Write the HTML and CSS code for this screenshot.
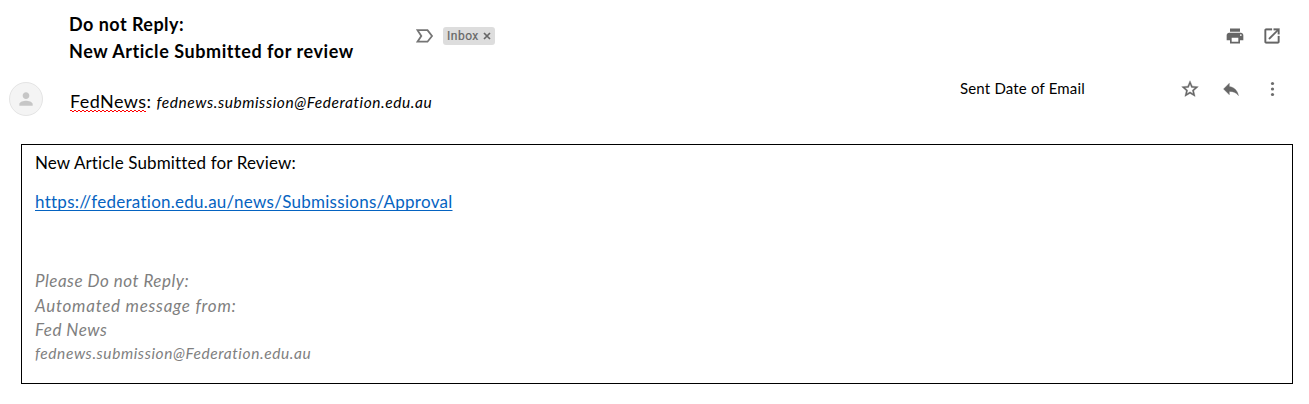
FILE: index.html
```html
<!DOCTYPE html>
<html lang="en">
<head>
<meta charset="utf-8">
<title>New Article Submitted for review</title>
<link rel="stylesheet" href="styles.css">
</head>
<body>
<header class="subject-row">
  <h1 class="subject"><span class="s1">Do not Reply:</span><br><span class="s2">New Article Submitted for review</span></h1>
  <svg class="marker" width="18" height="14" viewBox="0 0 18 14"><path d="M1.500 1.200H11.500L16 7L11.500 12.700H1.500L5.300 7Z" fill="none" stroke="#757575" stroke-width="1.800"/></svg>
  <span class="label"><span class="label-name">Inbox</span><svg width="8" height="8" viewBox="0 0 8 8"><path d="M1 1L7 7M7 1L1 7" stroke="#666" stroke-width="1.700"/></svg></span>
  <div class="tools">
    <svg width="20" height="20" viewBox="0 0 24 24"><path fill="#666" d="M19 8H5c-1.660 0-3 1.340-3 3v6h4v4h12v-4h4v-6c0-1.660-1.340-3-3-3zm-3 11H8v-5h8v5zm3-7c-.55 0-1-.45-1-1s.45-1 1-1 1 .45 1 1-.45 1-1 1zm-1-9H6v4h12V3z"/></svg>
    <svg width="20" height="20" viewBox="0 0 24 24"><path fill="#666" stroke="#666" stroke-width=".3" d="M19 19H5V5h7V3H5c-1.110 0-2 .9-2 2v14c0 1.100.89 2 2 2h14c1.100 0 2-.9 2-2v-7h-2v7zM14 3v2h3.590l-9.830 9.830 1.410 1.410L19 6.410V10h2V3h-7z"/></svg>
  </div>
</header>
<section class="sender-row">
  <div class="avatar"><svg width="20" height="20" viewBox="0 0 24 24"><path fill="#c6c6c6" d="M12 12c2.210 0 4-1.790 4-4s-1.790-4-4-4-4 1.790-4 4 1.790 4 4 4zm0 2c-2.670 0-8 1.340-8 4v2h16v-2c0-2.660-5.330-4-8-4z"/></svg></div>
  <p class="sender"><span class="name">FedNews</span><span class="colon">:</span><em class="address">fednews.submission@Federation.edu.au</em></p>
  <span class="date">Sent Date of Email</span>
  <div class="actions">
    <svg width="20" height="20" viewBox="0 0 24 24"><path fill="#666" stroke="#666" stroke-width=".4" d="M22 9.240l-7.190-.62L12 2 9.190 8.630 2 9.240l5.460 4.730L5.820 21 12 17.270 18.180 21l-1.630-7.030L22 9.240zM12 15.400l-3.760 2.270 1-4.280-3.320-2.880 4.380-.38L12 6.100l1.710 4.040 4.380.38-3.320 2.880 1 4.280L12 15.400z"/></svg>
    <svg width="20" height="20" viewBox="0 0 24 24"><path fill="#666" stroke="#666" stroke-width=".4" d="M10 9V5l-7 7 7 7v-4.100c5 0 8.500 1.600 11 5.100-1-5-4-10-11-11z"/></svg>
    <svg width="20" height="20" viewBox="0 0 20 20"><g fill="#6c6c6c"><circle cx="10.500" cy="4.500" r="1.600"/><circle cx="10.500" cy="10" r="1.600"/><circle cx="10.500" cy="15.500" r="1.600"/></g></svg>
  </div>
</section>
<main class="message">
  <p class="intro"><span>New Article Submitted for Review:</span></p>
  <p class="link-line"><a class="link" href="#">https://federation.edu.au/news/Submissions/Approval</a></p>
  <footer class="signature">
    <p><span class="g1">Please Do not Reply:</span></p>
    <p><span class="g2">Automated message from:</span></p>
    <p><span class="g3">Fed News</span></p>
    <p class="small"><span class="g4">fednews.submission@Federation.edu.au</span></p>
  </footer>
</main>
</body>
</html>
```
FILE: styles.css
```css
* { box-sizing: border-box; }
body { margin: 0; background: #fff; color: #000; font-family: Lato, "Liberation Sans", sans-serif; }
p, h1 { margin: 0; }
svg { display: block; flex: none; }
.subject-row { display: flex; height: 72px; padding: 11px 27px 0 69px; }
.subject { width: 347px; font-size: 18px; line-height: 27px; font-weight: 700; white-space: nowrap; }
.s1 { letter-spacing: .46px; }
.s2 { letter-spacing: .56px; }
.marker { margin-top: 18px; }
.label { display: flex; align-items: center; gap: 4px; width: 52px; height: 18px; margin: 16px 0 0 9px; padding-left: 4px; border-radius: 3px; background: #ddd; color: #666; font: 400 12px/18px Roboto, sans-serif; letter-spacing: .5px; -webkit-text-stroke: .2px #666; }
.tools { display: flex; gap: 17px; margin: 15px 0 0 auto; }
.sender-row { display: flex; height: 72px; padding: 0 27px 0 9px; }
.avatar { display: flex; align-items: center; justify-content: center; width: 34px; height: 34px; margin-top: 10px; border: 1px solid #e4e4e4; border-radius: 50%; background: #f4f4f4; }
.sender { display: flex; align-items: baseline; width: 890px; margin: 16px 0 0 27px; line-height: 27px; white-space: nowrap; }
/* Spelling squiggle: two one-pixel rows of dashes, half a period apart */
.name {
  font-size: 18px; line-height: 20px; letter-spacing: .4px; padding-bottom: 1px;
  background:
    linear-gradient(90deg, #f00 2px, transparent 2px) 0 calc(100% - 1px) / 4px 1px repeat-x,
    linear-gradient(90deg, transparent 2px, #f00 2px) 0 100% / 4px 1px repeat-x;
}
.colon { width: 10px; font-size: 18px; }
.address { font-size: 15.5px; letter-spacing: .57px; }
.date { font-size: 15px; line-height: 20px; margin-top: 6px; letter-spacing: .18px; white-space: nowrap; }
.actions { display: flex; gap: 21px; margin: 7px 0 0 auto; }
.message { width: 1272px; height: 240px; margin-left: 21px; padding: 8px 13px; border: 1px solid #000; font-size: 17px; }
.intro { height: 39px; line-height: 20px; letter-spacing: .13px; }
.link-line { height: 77px; line-height: 20px; letter-spacing: .27px; }
.link { color: #0563c1; text-decoration: underline 1px; text-underline-offset: 2px; text-decoration-skip-ink: none; }
.signature { color: #7f7f7f; font-size: 17px; line-height: 24.5px; font-style: italic; }
.g1, .g3 { letter-spacing: .5px; }
.g2 { letter-spacing: .74px; }
.small { display: flex; font-size: 15.5px; line-height: 21px; letter-spacing: .58px; }
```
